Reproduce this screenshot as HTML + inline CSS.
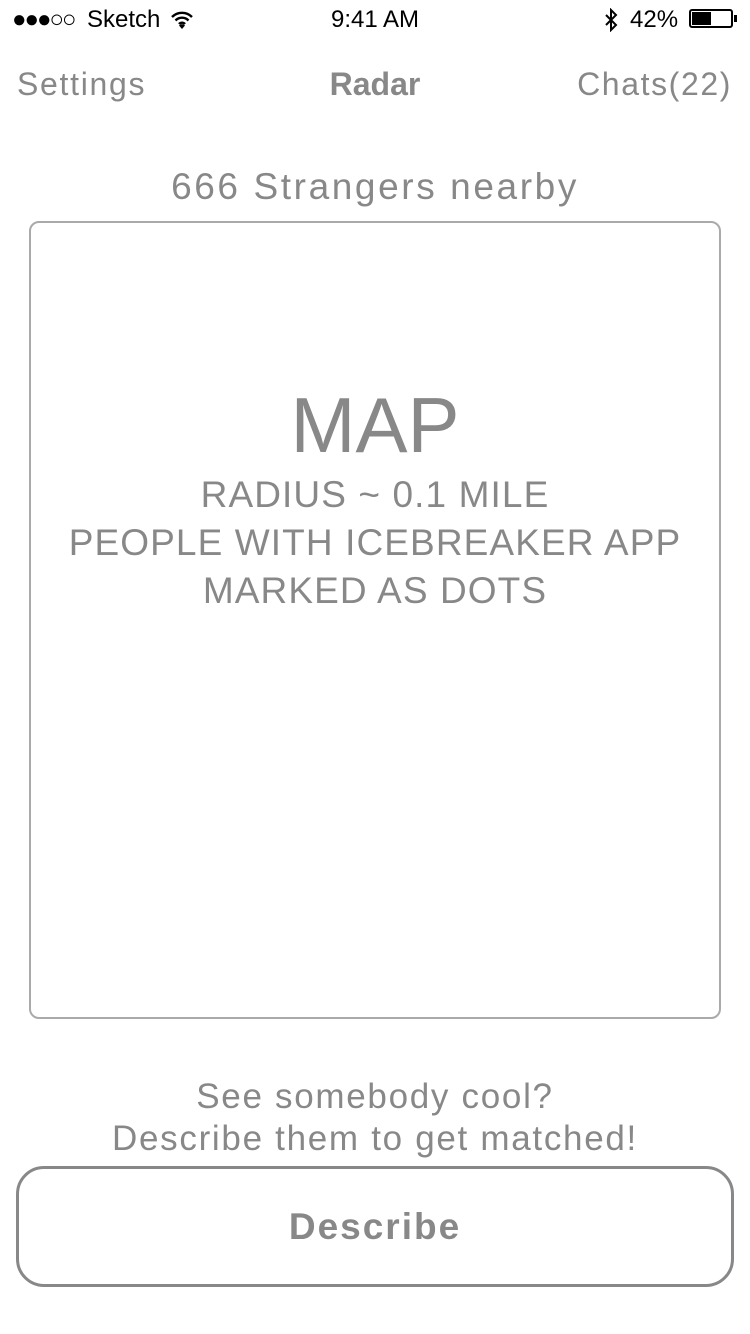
<!DOCTYPE html>
<html><head><style>
body{margin:0;width:750px;height:1334px;background:#fff;font-family:"Liberation Sans",sans-serif;position:relative;overflow:hidden;color:#888}
.a{position:absolute;white-space:nowrap}
.c{left:0;width:750px;text-align:center}
</style></head><body>
<div class="a" style="left:12px;top:6px;font-size:24px;color:#000;letter-spacing:-2px">●●●○○</div>
<div class="a" style="left:87px;top:6px;font-size:24px;color:#000">Sketch</div>
<svg class="a" style="left:170px;top:10px" width="24" height="20" viewBox="0 0 24 20"><path d="M2 7a14 14 0 0 1 20 0M5.5 10.5a9 9 0 0 1 13 0M9 14a4 4 0 0 1 6 0" stroke="#000" stroke-width="2.4" fill="none"/><path d="M12 19l-3-3.5a4 4 0 0 1 6 0z" fill="#000"/></svg>
<div class="a c" style="top:6px;font-size:24px;color:#000">9:41 AM</div>
<svg class="a" style="left:603px;top:8px" width="16" height="24" viewBox="0 0 16 24"><path d="M3 7l10 10-5 5V2l5 5L3 17" stroke="#000" stroke-width="2" fill="none"/></svg>
<div class="a" style="left:630px;top:6px;font-size:24px;color:#000">42%</div>
<div class="a" style="left:689px;top:9px;width:44px;height:19px;border:2px solid #000;border-radius:3px;box-sizing:border-box"><div style="width:19px;height:13px;margin:1px;background:#000"></div></div>
<div class="a" style="left:734px;top:15px;width:3px;height:7px;background:#000"></div>
<div class="a" style="left:17px;top:66px;font-size:32px;letter-spacing:1.7px">Settings</div>
<div class="a c" style="top:66px;font-size:32px;font-weight:bold;color:#888">Radar</div>
<div class="a" style="right:18px;top:66px;font-size:32px;letter-spacing:1.6px">Chats(22)</div>
<div class="a c" style="top:166px;font-size:37px;color:#888;letter-spacing:2.6px">666 Strangers nearby</div>
<div class="a" style="left:29px;top:221px;width:692px;height:798px;border:2px solid #aaa;border-radius:10px;box-sizing:border-box"></div>
<div class="a c" style="top:380px;font-size:78px;color:#888">MAP</div>
<div class="a c" style="top:471px;font-size:37px;line-height:48px;color:#888;letter-spacing:1.1px">RADIUS ~ 0.1 MILE<br>PEOPLE WITH ICEBREAKER APP<br>MARKED AS DOTS</div>
<div class="a c" style="top:1076px;font-size:35px;line-height:42px;color:#888;letter-spacing:1.7px">See somebody cool?<br>Describe them to get matched!</div>
<div class="a" style="left:16px;top:1166px;width:718px;height:121px;border:3px solid #888;border-radius:28px;box-sizing:border-box;text-align:center;line-height:115px;font-size:37px;font-weight:bold;color:#888;letter-spacing:2px">Describe</div>
</body></html>
